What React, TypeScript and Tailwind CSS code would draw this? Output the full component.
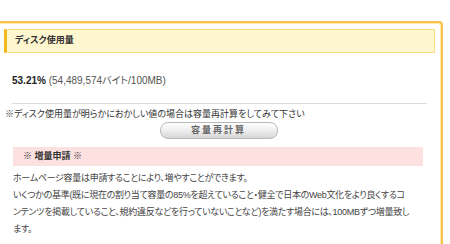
const font = "font-['Liberation_Sans','Noto_Sans_CJK_JP',sans-serif] [font-feature-settings:'palt']";

const lines = [
  'ホームページ容量は申請することにより、増やすことができます。',
  'いくつかの基準(既に現在の割り当て容量の85%を超えていること・健全で日本のWeb文化をより良くするコ',
  'ンテンツを掲載していること、規約違反などを行っていないことなど)を満たす場合には、100MBずつ増量致し',
  'ます。'
];

export default function App() {
  return (
    <main className={`h-[244px] w-[450px] overflow-hidden bg-white ${font}`}>
      <div className="mt-[21px] h-[240px] w-[443px] rounded-tr-[4px] border-t-2 border-r-2 border-[#f7c34c] shadow-[inset_-1px_1px_0_#fde9a8]">
        <div className="ml-[4px] mr-[6px] mt-[6px] flex h-[24px] items-center border border-l-[3px] border-[#f8de84] border-l-[#f3b81c] bg-[#fef6cf] pl-[8px]">
          <h2 className="text-[9px] font-bold text-[#333]">ディスク使用量</h2>
        </div>

        <p className="ml-[12px] mt-[21px] text-[10px] leading-[14px] text-[#555]">
          <span className="font-bold text-[#222]">53.21%</span> (54,489,574バイト/100MB)
        </p>

        <div className="ml-[12px] mr-[14px] mt-[15px] h-px bg-[#dcdcdc]" />

        <p className="ml-[5px] mt-[3px] text-[9px] leading-[14px] text-[#333]">
          ※ディスク使用量が明らかにおかしい値の場合は容量再計算をしてみて下さい
        </p>

        <div className="mt-[1px] flex justify-center">
          <button className="mr-[4px] h-[17px] w-[118px] rounded-[8px] border border-[#b9b9b9] bg-gradient-to-b from-white via-[#eeeeee] to-[#d6d6d6] text-[9px] font-bold leading-none tracking-[2px] text-[#666]">
            容量再計算
          </button>
        </div>

        <div className="ml-[13px] mr-[18px] mt-[8px] flex h-[19px] items-center bg-[#fde1e1] pl-[10px]">
          <h3 className="text-[9px] font-bold text-[#333]">※ 増量申請 ※</h3>
        </div>

        <div className="ml-[13px] mt-[4px] text-[9px] leading-[17px] tracking-[-0.3px] text-[#444]">
          {lines.map((l) => (
            <p key={l} className="whitespace-nowrap">{l}</p>
          ))}
        </div>
      </div>
    </main>
  );
}
